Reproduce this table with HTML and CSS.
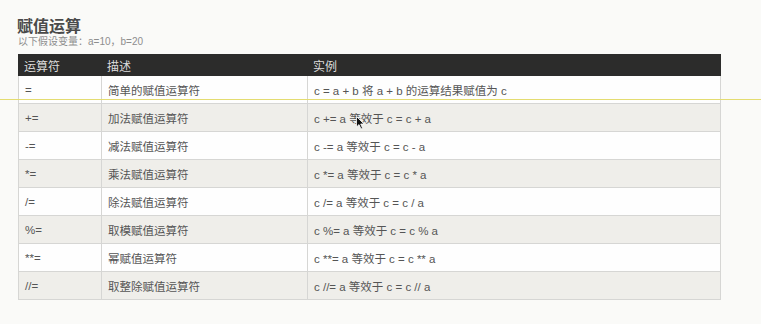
FILE: index.html
```html
<!DOCTYPE html>
<html lang="zh">
<head>
<meta charset="utf-8">
<title>赋值运算</title>
<link rel="stylesheet" href="styles.css">
</head>
<body>
<div class="page">
  <h1 class="title">赋值运算</h1>
  <p class="subtitle">以下假设变量：a=10，b=20</p>
  <table class="ops">
    <thead>
      <tr><th class="c1">运算符</th><th class="c2">描述</th><th class="c3">实例</th></tr>
    </thead>
    <tbody>
      <tr><td>=</td><td>简单的赋值运算符</td><td>c = a + b 将 a + b 的运算结果赋值为 c</td></tr>
      <tr><td>+=</td><td>加法赋值运算符</td><td>c += a 等效于 c = c + a</td></tr>
      <tr><td>-=</td><td>减法赋值运算符</td><td>c -= a 等效于 c = c - a</td></tr>
      <tr><td>*=</td><td>乘法赋值运算符</td><td>c *= a 等效于 c = c * a</td></tr>
      <tr><td>/=</td><td>除法赋值运算符</td><td>c /= a 等效于 c = c / a</td></tr>
      <tr><td>%=</td><td>取模赋值运算符</td><td>c %= a 等效于 c = c % a</td></tr>
      <tr><td>**=</td><td>幂赋值运算符</td><td>c **= a 等效于 c = c ** a</td></tr>
      <tr><td>//=</td><td>取整除赋值运算符</td><td>c //= a 等效于 c = c // a</td></tr>
    </tbody>
  </table>
</div>
<div class="guide-line"></div>
<svg class="cursor" width="9" height="14" viewBox="0 0 9 14"><path d="M0.5 0.5 L0.5 11 L3 8.6 L5 13 L6.6 12.3 L4.7 8 L8 8 Z" fill="#111" stroke="#fff" stroke-width="0.8"/></svg>
</body>
</html>
```
FILE: styles.css
```css
html, body {
  margin: 0;
  padding: 0;
  background: #fafaf8;
}
body {
  width: 761px;
  height: 324px;
  overflow: hidden;
  position: relative;
  font-family: "Liberation Sans", "Noto Sans CJK SC", sans-serif;
}
.page {
  padding: 17px 0 0 18px;
}
.title {
  margin: 0 0 0 -1px;
  font-size: 16px;
  line-height: 20px;
  font-weight: bold;
  color: #4a4a4a;
}
.subtitle {
  margin: -1px 0 0;
  font-size: 10px;
  line-height: 12px;
  color: #8e8e8e;
}
.ops {
  margin-top: 6px;
  width: 703px;
  border-collapse: collapse;
  font-size: 11.5px;
  color: #555;
}
.ops th {
  background: #2c2c2b;
  color: #dcdcdc;
  font-weight: normal;
  text-align: left;
  height: 20px;
  padding: 0 0 0 5px;
  border: 1px solid #2c2c2b;
  font-size: 12px;
}
.ops .c1 { width: 77px; }
.ops .c2 { width: 200px; }
.ops td {
  height: 27px;
  padding: 0 0 0 6px;
  border: 1px solid #d6d6d4;
  background: #fefefe;
}
.ops tbody tr:nth-child(even) td {
  background: #efeeea;
}
.guide-line {
  position: absolute;
  left: 0;
  top: 99px;
  width: 761px;
  height: 1px;
  background: #e4dc70;
}
.cursor {
  position: absolute;
  left: 356px;
  top: 116px;
}
```
